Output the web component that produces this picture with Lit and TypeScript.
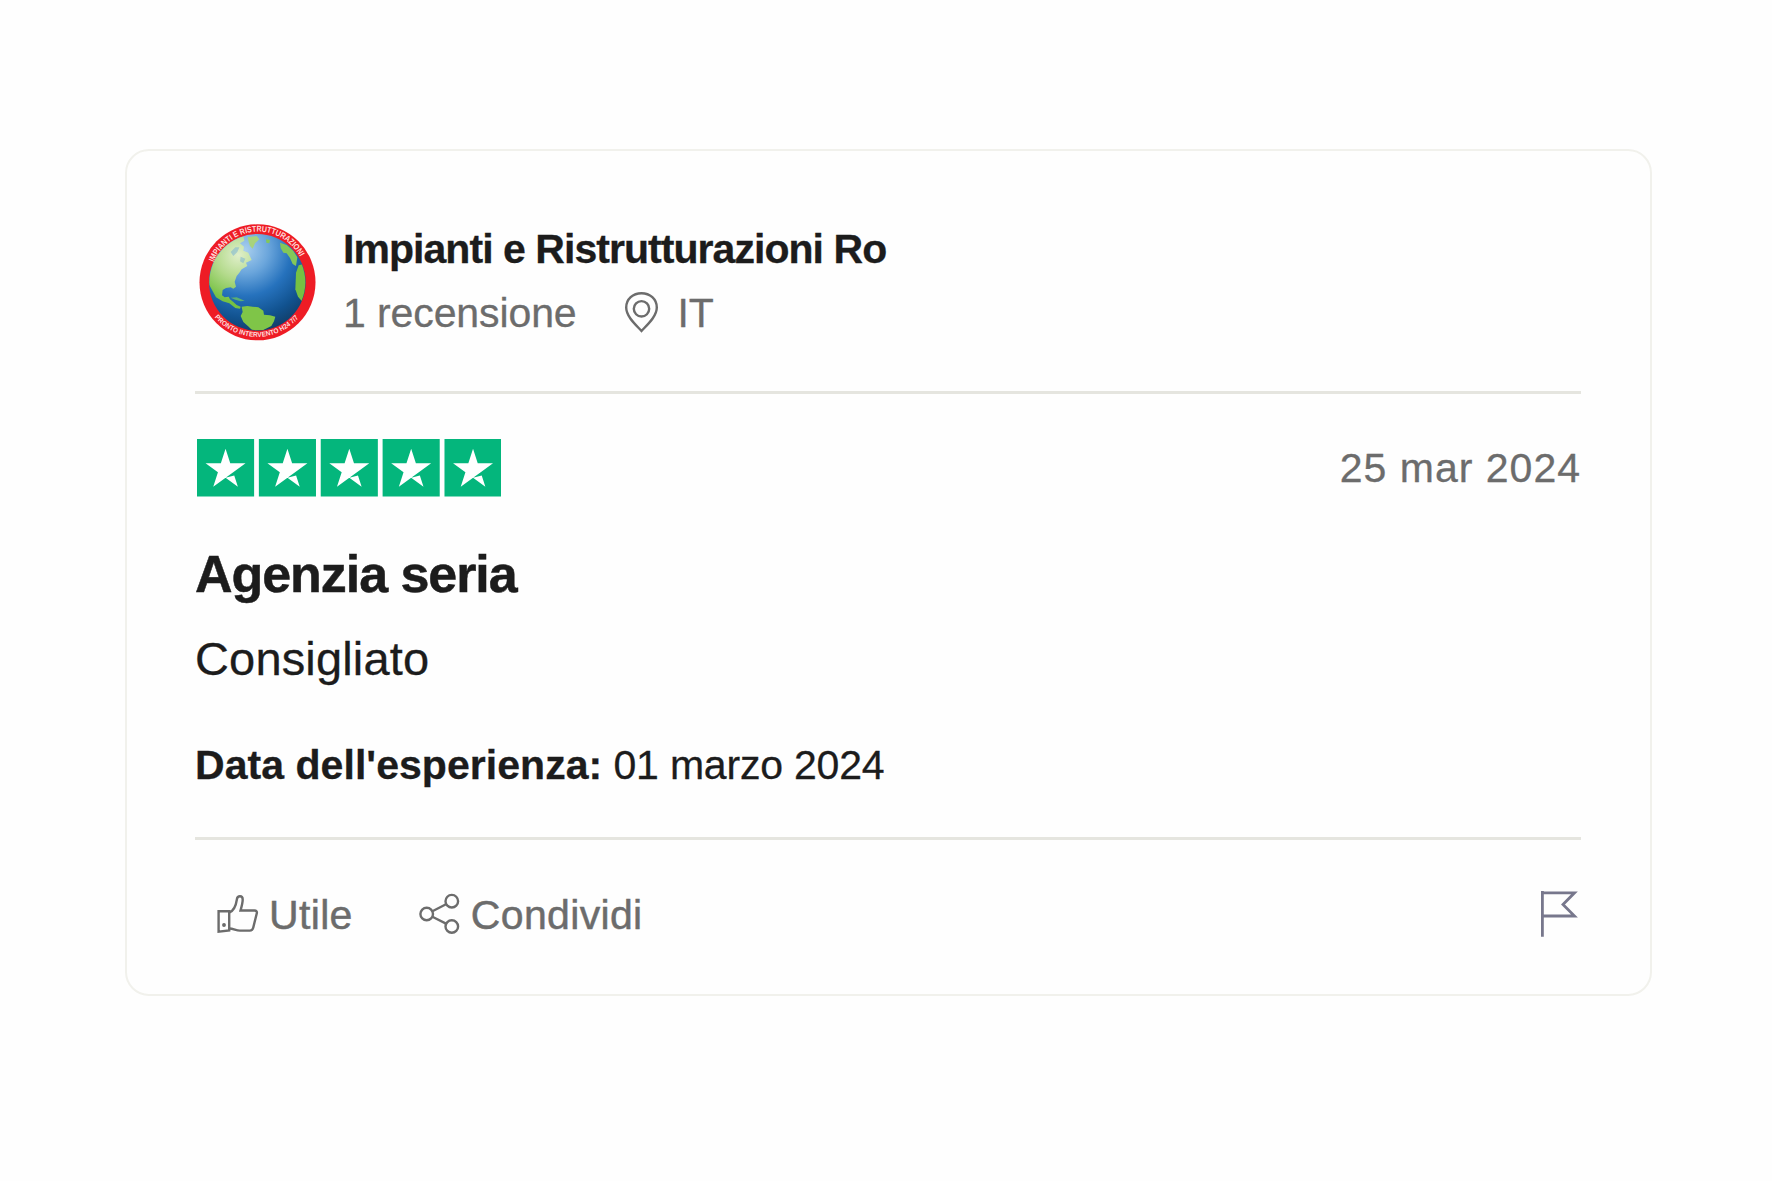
import { LitElement, html, svg, css } from "lit";
import { customElement, property } from "lit/decorators.js";

@customElement("globe-avatar")
class GlobeAvatar extends LitElement {
  static styles = css`
    :host { display: block; }
    .globe { display: block; width: 117px; height: 117px; }
    .ring { font-family: "Liberation Sans", Arial, sans-serif; font-size: 25px; font-weight: 700; fill: #ffdede; }
    .small { font-size: 21px; }
  `;
  render() {
    return html`<svg class="globe" viewBox="27 42 351 351" role="img" aria-label="Logo">
      <defs>
        <radialGradient id="sea" gradientUnits="userSpaceOnUse" cx="165" cy="120" r="250">
          <stop offset="0" stop-color="#a9cfee" />
          <stop offset=".28" stop-color="#6ba6dc" />
          <stop offset=".55" stop-color="#2672bd" />
          <stop offset=".82" stop-color="#11528f" />
          <stop offset="1" stop-color="#123f6a" />
        </radialGradient>
        <radialGradient id="land" gradientUnits="userSpaceOnUse" cx="145" cy="135" r="140">
          <stop offset="0" stop-color="#e0efcb" />
          <stop offset=".5" stop-color="#b3da8b" />
          <stop offset="1" stop-color="#76c143" />
        </radialGradient>
        <clipPath id="disc"><circle cx="202" cy="217" r="144" /></clipPath>
        <path id="upper" d="M71 157 A145 151 0 0 1 338 157" />
        <path id="lower" d="M74 322 A166 166 0 0 0 332 316" />
      </defs>
      <circle cx="202.500" cy="217" r="174" fill="#ee1c25" />
      <circle cx="202" cy="217" r="145" fill="url(#sea)" />
      <g clip-path="url(#disc)">
        <path fill="url(#land)" d="M50 165 L70 130 L100 100 L140 80 L160 78 L163 92 L150 100 L162 110 L160 122 L175 128 L185 150 L168 158 L172 168 L155 178 L148 188 L140 198 L134 215 L138 230 L130 236 L122 232 L108 234 L98 240 L96 256 L104 262 L116 260 L120 268 L130 276 L140 285 L152 290 L150 296 L136 294 L118 280 L98 274 L78 262 L66 240 L55 220Z" />
        <path fill="#a8d37b" d="M173 82 L200 78 L208 88 L195 100 L188 116 L180 108 L176 96Z" />
        <path fill="#83c75a" d="M228 88 L240 90 L238 100 L229 98Z M270 98 L290 105 L310 122 L322 142 L318 168 L308 162 L300 144 L290 130 L280 128 L272 114Z" />
        <path fill="#76c143" d="M318 188 L326 166 L350 160 L352 250 L336 274 L324 260 L316 238Z" />
        <path fill="#7fc548" d="M155 290 L172 288 L188 290 L205 292 L220 302 L222 314 L240 316 L256 320 L252 334 L244 348 L220 360 L190 364 L176 350 L160 336 L152 318 L158 306Z" />
        <path fill="#5bae72" d="M122 263 L140 262 L164 272 L152 274 L136 269Z" />
        <path fill="#69a8da" opacity=".45" d="M122 126 L136 112 L148 112 L142 126 L130 138Z M152 140 L166 146 L160 160 L150 154Z" />
      </g>
      <text class="ring"><textPath href="#upper" textLength="325" lengthAdjust="spacingAndGlyphs">IMPIANTI E RISTRUTTURAZIONI</textPath></text>
      <text class="ring small"><textPath href="#lower" textLength="286" lengthAdjust="spacingAndGlyphs">PRONTO INTERVENTO H24 7/7</textPath></text>
    </svg>`;
  }
}

@customElement("star-rating")
class StarRating extends LitElement {
  @property({ type: Number }) value = 5;
  static styles = css`
    :host { display: block; }
    .stars { display: block; width: 304.600px; height: 57.500px; }
  `;
  render() {
    return html`<svg class="stars" viewBox="0 0 512 96" preserveAspectRatio="none" role="img" aria-label="${this.value} stelle">
      ${Array.from({ length: this.value }, (_, i) => svg`<g transform="translate(${i * 104} 0)">
        <path fill="#04b67c" d="M0 0h96v96H0z" />
        <path fill="#fff" d="M48 64.700L62.600 61l6.100 18.800zm33.600-24.300H55.900L48 16.200l-7.900 24.200H14.400l20.800 15-7.900 24.200 20.800-15 12.800-9.200z" />
      </g>`)}
    </svg>`;
  }
}

@customElement("app-root")
class AppRoot extends LitElement {
  static styles = css`
    :host { display: block; background: #fefefe; font-family: "Liberation Sans", Arial, sans-serif; font-size: 41px; line-height: 50px; color: #1c1c1c; }
    * { box-sizing: border-box; }
    .page { height: 1181px; padding: 149px 120px 0 125px; overflow: hidden; }
    .card { height: 847px; border: 2px solid #f1f1ec; border-radius: 24px; padding: 72px 69px 0 68px; }
    .header { display: flex; gap: 27px; height: 168px; padding-left: 4px; }
    .avatar { margin-top: 1px; }
    .who { display: flex; flex-direction: column; gap: 14px; padding-top: 1px; white-space: nowrap; }
    .name { font-weight: 700; letter-spacing: -0.950px; -webkit-text-stroke: 0.300px #1c1c1c; }
    .meta { display: flex; color: #6c6c6c; -webkit-text-stroke: 0.300px #6c6c6c; letter-spacing: -0.100px; }
    .place { display: flex; gap: 19px; margin-left: 47px; }
    .pin { display: block; width: 35px; height: 42px; margin-top: 3px; }
    .divider { height: 3px; background: #e5e5df; }
    .rating { display: flex; justify-content: space-between; padding: 45px 0 0 1.500px; height: 150px; }
    .date { margin-top: 4px; color: #6c6c6c; letter-spacing: 1px; -webkit-text-stroke: 0.300px #6c6c6c; }
    .title { margin: 0; font-size: 52px; line-height: 60px; font-weight: 700; letter-spacing: -1.050px; -webkit-text-stroke: 0.500px #1c1c1c; }
    .text { margin: 27px 0 0; font-size: 47px; line-height: 56px; letter-spacing: 0.150px; -webkit-text-stroke: 0.300px #1c1c1c; }
    .when { margin: 53px 0 47px; letter-spacing: -0.200px; -webkit-text-stroke: 0.300px #1c1c1c; }
    .label { font-weight: 700; letter-spacing: 0.050px; }
    .actions { display: flex; align-items: flex-start; justify-content: space-between; padding: 50px 2px 0 20px; color: #6c6c6c; }
    .group { display: flex; gap: 64px; }
    .action { display: flex; gap: 10px; letter-spacing: 0.350px; -webkit-text-stroke: 0.500px #6c6c6c; }
    .icon { display: block; width: 44px; height: 44px; margin-top: 2px; }
    .flag { display: block; width: 40px; height: 48px; }
  `;

  render() {
    return html`<main class="page">
      <article class="card">
        <header class="header">
          <globe-avatar class="avatar"></globe-avatar>
          <div class="who">
            <div class="name">Impianti e Ristrutturazioni Ro</div>
            <div class="meta">
              <span>1 recensione</span>
              <span class="place">
                <svg class="pin" viewBox="0 0 35 42" fill="none" stroke="#6c6c6c" stroke-width="2.400">
                  <path d="M17.500 40C12 34 2.200 25.500 2.200 16.500C2.200 8 9 2.200 17.500 2.200S32.800 8 32.800 16.500C32.800 25.500 23 34 17.500 40Z" />
                  <circle cx="17.500" cy="17.800" r="7.700" />
                </svg>
                <span>IT</span>
              </span>
            </div>
          </div>
        </header>
        <div class="divider"></div>
        <div class="rating">
          <star-rating .value=${5}></star-rating>
          <div class="date">25 mar 2024</div>
        </div>
        <h2 class="title">Agenzia seria</h2>
        <p class="text">Consigliato</p>
        <p class="when"><span class="label">Data dell'esperienza:</span> 01 marzo 2024</p>
        <div class="divider"></div>
        <footer class="actions">
          <div class="group">
            <div class="action">
              <svg class="icon" viewBox="215 892 44 44" fill="none" stroke="#6c6c6c" stroke-width="2.400">
                <path d="M218.600 911.200H229.200V930.500L218.600 931.700Z" />
                <circle cx="224" cy="925" r="1.300" fill="#6c6c6c" stroke-width="1.200" />
                <path d="M229.200 912.500C235.500 910.500 236.500 902 237 898.800C237.500 895.500 242.700 895 242.700 899.500C242.700 903 241.500 907 240.500 910.500H254.500C256.300 910.500 257.200 911.600 256.800 913.300L253.200 927.800C252.700 929.800 251.700 930.600 249.800 930.600H240C236 930.600 233.500 928.500 229.200 928.500" />
              </svg>
              <span>Utile</span>
            </div>
            <div class="action">
              <svg class="icon" viewBox="418 892 44 44" fill="none" stroke="#6c6c6c" stroke-width="2.400">
                <circle cx="427.700" cy="914" r="6.300" />
                <circle cx="452.800" cy="901.200" r="6.300" />
                <circle cx="452.800" cy="926.500" r="6.300" />
                <path d="M433.400 911.300L447 904.300M433.400 916.800L447 923.600" />
              </svg>
              <span>Condividi</span>
            </div>
          </div>
          <svg class="flag" viewBox="1539 890 40 48" fill="none" stroke="#77778c" stroke-width="2.800">
            <path d="M1542.400 891V936.700M1542.400 892.800H1574.500L1563 904.500L1574.500 916H1542.400" />
          </svg>
        </footer>
      </article>
    </main>`;
  }
}
